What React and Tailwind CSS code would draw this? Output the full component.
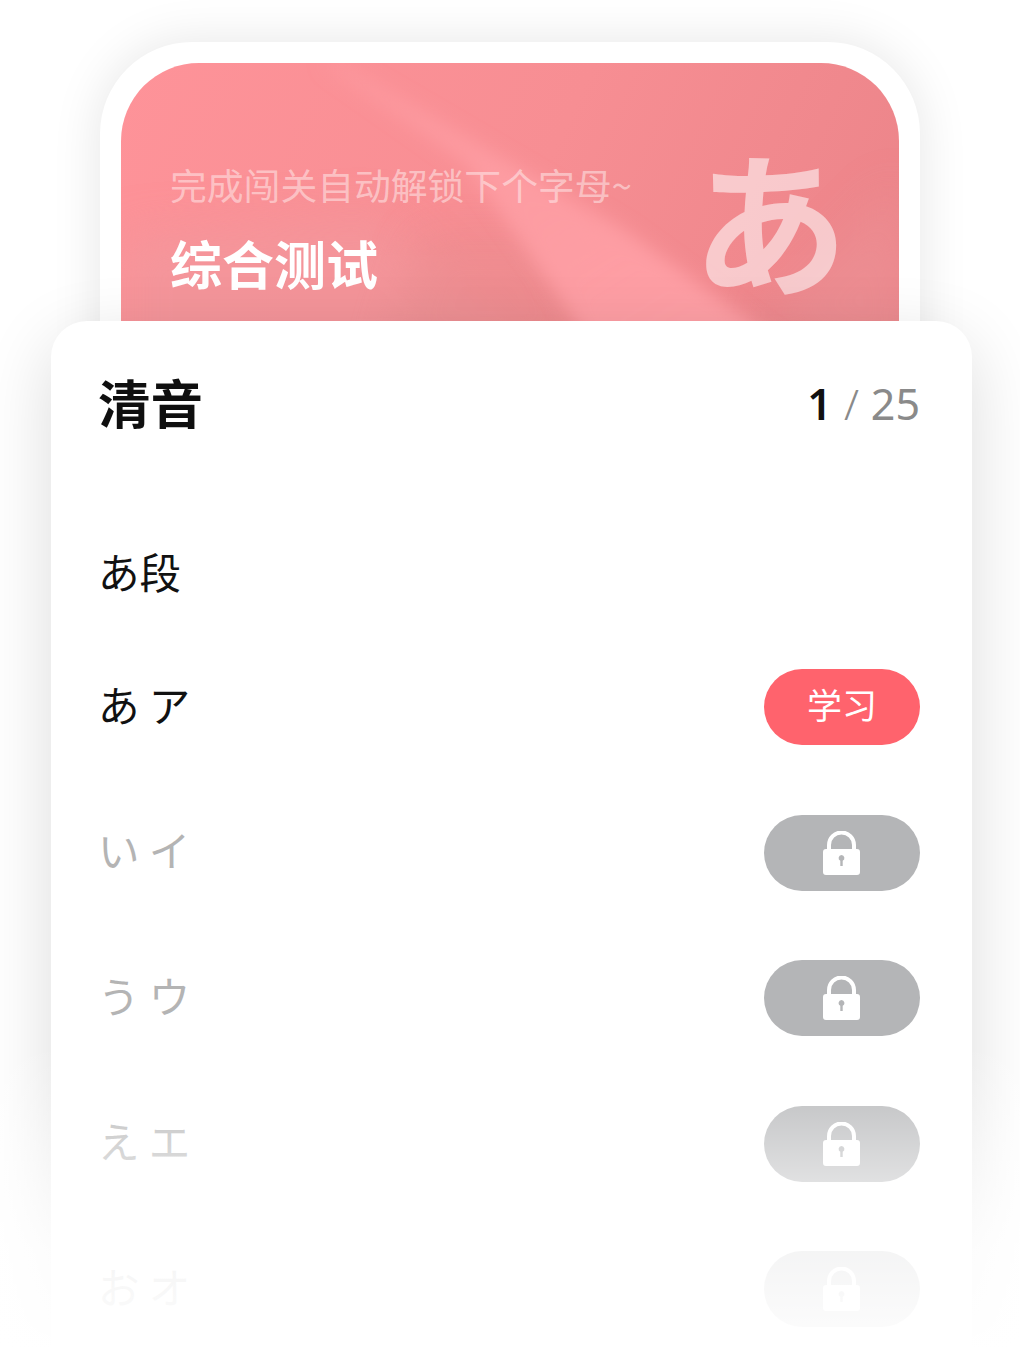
const kana = [
  { text: 'あ ア', active: true },
  { text: 'い イ' },
  { text: 'う ウ' },
  { text: 'え エ' },
  { text: 'お オ' },
]

function LockIcon() {
  return (
    <svg className="mr-[1px]" width="37" height="44" viewBox="0 0 37 44">
      <path d="M6 19V14a12.5 12.5 0 0 1 25 0v5" fill="none" stroke="#fff" strokeWidth="4" />
      <path
        fillRule="evenodd"
        fill="#fff"
        d="M3 18h31a3 3 0 0 1 3 3v20a3 3 0 0 1-3 3H3a3 3 0 0 1-3-3V21a3 3 0 0 1 3-3ZM18.5 24a3 3 0 0 0-1.2 5.7V35h2.4v-5.3A3 3 0 0 0 18.5 24Z"
      />
    </svg>
  )
}

function Row({ text, active }) {
  return (
    <div className="flex h-[76px] items-center justify-between">
      <span className={`pb-[5px] text-[41.5px] leading-none ${active ? 'text-[#111]' : 'text-[#b4b4b4]'}`}>{text}</span>
      {active ? (
        <button className="flex h-[76px] w-[156px] items-center justify-center rounded-full bg-[#ff636d] pb-[5px] text-[35px] text-white">
          学习
        </button>
      ) : (
        <div className="flex h-[76px] w-[156px] items-center justify-center rounded-full bg-[#b4b5b7]">
          <LockIcon />
        </div>
      )}
    </div>
  )
}

export default function App() {
  return (
    <div className="relative h-[1350px] w-[1020px] overflow-hidden bg-white pt-[42px] font-['Noto_Sans_CJK_SC',sans-serif]">
      <div className="mx-[100px] h-[400px] rounded-t-[92px] bg-white p-[21px] shadow-[0_0_50px_rgba(0,0,0,0.1)]">
        <div className="relative h-full overflow-hidden rounded-t-[78px] bg-[linear-gradient(115deg,#fe9399_0%,#f78e93_50%,#ea8388_100%)]">
          {/* light streaks of the banner picture */}
          <svg className="absolute inset-0 h-full w-full" viewBox="0 0 778 358" preserveAspectRatio="none">
            <defs>
              <filter id="soft" x="-20%" y="-20%" width="140%" height="140%">
                <feGaussianBlur stdDeviation="9" />
              </filter>
              <filter id="softer" x="-30%" y="-30%" width="160%" height="160%">
                <feGaussianBlur stdDeviation="22" />
              </filter>
              <linearGradient id="streak" x1="0" y1="0" x2="1" y2="1">
                <stop offset="0" stopColor="#ffa0a6" stopOpacity="0.4" />
                <stop offset="0.45" stopColor="#ffa0a6" stopOpacity="0.8" />
                <stop offset="1" stopColor="#ffa0a6" stopOpacity="1" />
              </linearGradient>
            </defs>
            <polygon points="0,170 260,150 420,300 0,320" fill="#f2979c" opacity="0.7" filter="url(#softer)" />
            <polygon points="300,170 430,170 480,300 260,300" fill="#e58a8c" opacity="0.45" filter="url(#softer)" />
            <polygon points="640,258 778,120 800,320" fill="#ec9094" opacity="0.7" filter="url(#softer)" />
            <polygon points="199,0 221,0 504,167 660,280 470,280 344,100" fill="url(#streak)" filter="url(#soft)" />
          </svg>

          <div className="relative flex justify-between pl-[49px] pr-[51px]">
            <div>
              <p className="mt-[92px] text-[36.8px] leading-[58px] whitespace-nowrap text-white/45">完成闯关自动解锁下个字母~</p>
              <h1 className="mt-[21px] text-[52px] leading-[58px] font-bold text-white">综合测试</h1>
            </div>
            <span className="mt-[58px] text-[156px] leading-[190px] font-bold text-white/55">あ</span>
          </div>
        </div>
      </div>

      <div className="relative mx-[51px] -mt-[121px] h-[1100px] w-[921px] rounded-[36px] bg-white pl-[47px] pr-[52px] pt-[46px] shadow-[0_20px_70px_rgba(0,0,0,0.14)]">
        <div className="flex h-[76px] items-center justify-between">
          <h2 className="pb-[8px] text-[52.5px] leading-none font-bold text-[#0f0f0f]">清音</h2>
          <div className="flex items-center gap-[12px] pb-[3px] font-['Noto_Sans',sans-serif] text-[43px] leading-none text-[#8a8a8a]">
            <span className="font-semibold text-[#111]">1</span>
            <span className="font-light">/</span>
            <span>25</span>
          </div>
        </div>

        <div className="mt-[92px] flex h-[76px] items-center pb-[4px] text-[41.5px] text-[#111]">あ段</div>

        <div className="mt-[58px] flex flex-col gap-[69.5px]">
          {kana.map((k) => (
            <Row key={k.text} text={k.text} active={k.active} />
          ))}
        </div>
      </div>

      {/* list fades out towards the bottom of the page */}
      <div className="absolute inset-x-0 bottom-0 h-[305px] bg-[linear-gradient(to_bottom,rgba(255,255,255,0)_0%,rgba(255,255,255,0.26)_20%,rgba(255,255,255,0.58)_44%,rgba(255,255,255,0.86)_67%,rgba(255,255,255,0.95)_92%,#fff_100%)]" />
    </div>
  )
}
